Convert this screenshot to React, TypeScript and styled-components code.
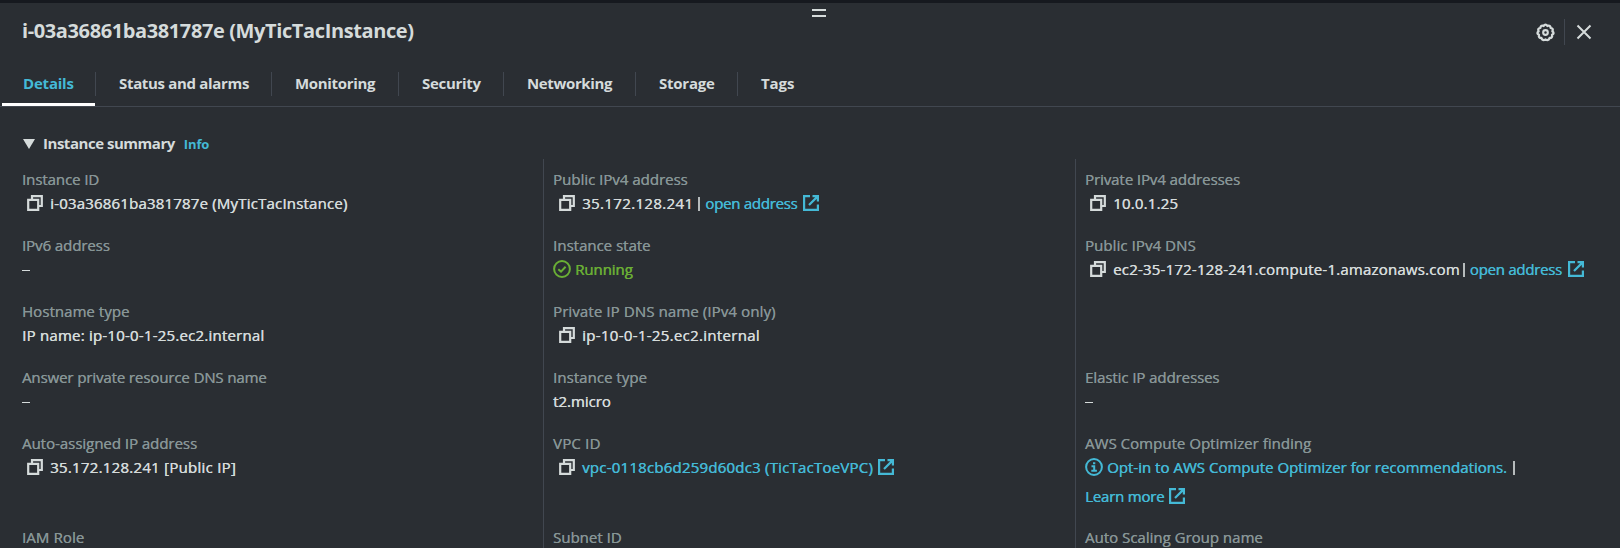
import React from "react";
import styled, { createGlobalStyle } from "styled-components";

const GlobalStyle = createGlobalStyle`
  * { box-sizing: border-box; }
  html, body { margin: 0; background: #2a2e33; overflow: hidden; }
`;

const color = {
  text: "#d5dbdb",
  label: "#879596",
  link: "#44b9d6",
  success: "#6aaf35",
  border: "#414750",
};

const Panel = styled.main`
  display: flex;
  flex-direction: column;
  height: 548px;
  overflow: hidden;
  border-top: 3px solid #16191f;
  background: #2a2e33;
  color: ${color.text};
  font-family: "Open Sans", "Noto Sans", sans-serif;
  font-size: 15px;
  line-height: 24px;
  white-space: nowrap;

  > * { flex-shrink: 0; }
`;

const HandleRow = styled.div`
  display: flex;
  justify-content: center;
  height: 14px;
  padding: 6px 0 0 18px;
`;

const Handle = styled.div`
  width: 14px;
  height: 8px;
  border: solid ${color.text};
  border-width: 2px 0;
`;

const Header = styled.header`
  display: flex;
  justify-content: space-between;
  height: 49px;
  padding: 0 28px 0 22px;
`;

const Title = styled.h1<{ $track: number }>`
  margin: 0;
  font-size: 20px;
  font-weight: 700;
  line-height: 28px;
  letter-spacing: ${(p) => p.$track}px;
`;

const Actions = styled.div`
  display: flex;
  align-items: center;
  height: 26px;
  margin-top: 2px;
`;

const ActionButton = styled.button`
  display: flex;
  padding: 0;
  border: 0;
  background: none;
  color: ${color.text};
`;

const ActionDivider = styled.div`
  width: 1px;
  height: 26px;
  margin: 0 11px 0 9px;
  background: ${color.border};
`;

const TabBar = styled.nav`
  display: flex;
  height: 41px;
  padding-left: 2px;
  border-bottom: 1px solid ${color.border};
`;

const Tab = styled.button<{ $width: number; $track: number; $active?: boolean }>`
  display: flex;
  align-items: flex-start;
  width: ${(p) => p.$width}px;
  height: 40px;
  border: 0;
  border-bottom: 3px solid ${(p) => (p.$active ? "#fff" : "transparent")};
  background: none;
  color: ${(p) => (p.$active ? color.link : color.text)};
  font: 700 15px/24px "Open Sans", "Noto Sans", sans-serif;
  letter-spacing: ${(p) => p.$track}px;
  padding: 5px 0 0 ${(p) => (p.$active ? 21 : 23)}px;
`;

const TabDivider = styled.div`
  width: 1px;
  height: 24px;
  margin-top: 6px;
  background: ${color.border};
`;

const Summary = styled.div`
  display: flex;
  align-items: center;
  height: 24px;
  margin: 24px 0 4px 23px;
`;

const Caret = styled.svg`
  flex: none;
  margin-top: 2px;
`;

const SummaryTitle = styled.h2`
  margin: 0 0 0 8px;
  font-size: 15px;
  font-weight: 700;
  letter-spacing: -0.47px;
`;

const InfoLink = styled.a`
  margin: 1px 0 0 9px;
  color: ${color.link};
  font-size: 13px;
  font-weight: 700;
  letter-spacing: -0.13px;
`;

const Columns = styled.section`
  display: grid;
  grid-template-columns: 543px 532px 1fr;
  height: 400px;
`;

const Column = styled.div<{ $first?: boolean }>`
  display: flex;
  flex-direction: column;
  padding: 8px 0 0 ${(p) => (p.$first ? 22 : 9)}px;
  border-left: ${(p) => (p.$first ? "0" : `1px solid ${color.border}`)};
`;

const Field = styled.div<{ $tall?: boolean }>`
  flex: none;
  height: ${(p) => (p.$tall ? 94 : 66)}px;
`;

const Label = styled.div<{ $track?: number }>`
  height: 24px;
  color: ${color.label};
  letter-spacing: ${(p) => p.$track ?? 0}px;
  text-shadow: 0.25px 0 0 currentColor;
`;

const Value = styled.div`
  display: flex;
  align-items: center;
  height: 24px;
`;

const LearnMoreRow = styled(Value)`
  margin-top: 5px;
`;

const Text = styled.span<{ $track?: number }>`
  letter-spacing: ${(p) => p.$track ?? 0}px;
  text-shadow: 0.4px 0 0 currentColor;
`;

const Link = styled(Text)`
  color: ${color.link};
`;

const Status = styled(Text)`
  margin-left: 4px;
  color: ${color.success};
`;

const Dash = styled.div`
  width: 8px;
  height: 1px;
  margin-top: 3px;
  background: ${color.text};
`;

const Bar = styled.span<{ $left: number; $right?: number }>`
  width: 2px;
  height: 14px;
  margin: 1px ${(p) => p.$right ?? 0}px 0 ${(p) => p.$left}px;
  background: #b6bbbc;
`;

const Icon = styled.svg<{ $left?: number; $right?: number; $tone?: string }>`
  flex: none;
  display: block;
  margin-left: ${(p) => p.$left ?? 0}px;
  margin-right: ${(p) => p.$right ?? 0}px;
  color: ${(p) => p.$tone ?? "inherit"};
  fill: none;
  stroke: currentColor;
  stroke-width: 2;
`;

const CopyIcon = ({ left = 5 }: { left?: number }) => (
  <Icon $left={left} $right={7} width="16" height="16" viewBox="0 0 16 16">
    <path d="M1.2 4.8h10v10h-10z" strokeWidth="2.2" />
    <path d="M5 4.8V1.2h9.8v9.8h-3.6" strokeWidth="2.2" />
  </Icon>
);

const ExternalIcon = ({ left = 5 }: { left?: number }) => (
  <Icon $left={left} $tone={color.link} width="16" height="16" viewBox="0 0 16 16">
    <path d="M7 1.1H1.1v13.8h13.8V9.5" strokeWidth="2.2" />
    <path d="M9.5 1.1h5.4v5.4M14.9 1.1 6 10" strokeWidth="2.2" />
  </Icon>
);

const CheckIcon = () => (
  <Icon $tone={color.success} width="18" height="18" viewBox="0 0 18 18">
    <circle cx="9" cy="9" r="7.9" />
    <path d="M5.3 9.2 8 11.6l4.6-4.8" />
  </Icon>
);

const InfoIcon = () => (
  <Icon $tone={color.link} $right={4} width="18" height="18" viewBox="0 0 18 18">
    <circle cx="9" cy="9" r="7.9" />
    <path d="M6.5 8.3h2.7v4.3M6.3 12.7h5.6M8 5.2h2.3" />
  </Icon>
);

const GearIcon = () => (
  <Icon width="19" height="19" viewBox="0 0 18 18">
    <path
      d="M7.1 2.8Q9 .2 10.9 2.8Q13.8 1.8 13.8 4.6Q16.9 5.2 15.5 7.8Q17.9 9.8 15.2 11.2Q15.8 14.2 12.9 14.2Q11.7 17.3 9 15.5Q6.3 17.3 5.1 14.2Q2.2 14.2 2.8 11.2Q.1 9.8 2.5 7.8Q1.1 5.2 4.2 4.6Q4.2 1.8 7.1 2.8z"
      strokeWidth="2.2"
      strokeLinejoin="round"
    />
    <circle cx="9" cy="9" r="2.2" />
  </Icon>
);

const CloseIcon = () => (
  <Icon width="16" height="16" viewBox="0 0 16 16">
    <path d="M1.5 1.5l13 13M14.5 1.5l-13 13" />
  </Icon>
);

const tabs = [
  { name: "Details", width: 93, track: -0.2 },
  { name: "Status and alarms", width: 175, track: -0.32 },
  { name: "Monitoring", width: 126, track: -0.32 },
  { name: "Security", width: 104, track: -0.3 },
  { name: "Networking", width: 131, track: -0.36 },
  { name: "Storage", width: 101, track: -0.23 },
  { name: "Tags", width: 90, track: -0.07 },
];

export default function App() {
  return (
    <>
      <GlobalStyle />
      <Panel>
        <HandleRow>
          <Handle />
        </HandleRow>
        <Header>
          <Title $track={-0.39}>i-03a36861ba381787e (MyTicTacInstance)</Title>
          <Actions>
            <ActionButton aria-label="Preferences">
              <GearIcon />
            </ActionButton>
            <ActionDivider />
            <ActionButton aria-label="Close">
              <CloseIcon />
            </ActionButton>
          </Actions>
        </Header>
        <TabBar>
          {tabs.map((tab, i) => (
            <React.Fragment key={tab.name}>
              {i > 0 && <TabDivider />}
              <Tab $width={tab.width} $track={tab.track} $active={i === 0}>
                {tab.name}
              </Tab>
            </React.Fragment>
          ))}
        </TabBar>
        <Summary>
          <Caret width="12" height="10" viewBox="0 0 12 10">
            <path d="M0 0h12L6 10z" fill={color.text} />
          </Caret>
          <SummaryTitle>Instance summary</SummaryTitle>
          <InfoLink>Info</InfoLink>
        </Summary>
        <Columns>
          <Column $first>
            <Field>
              <Label $track={-0.08}>Instance ID</Label>
              <Value>
                <CopyIcon />
                <Text $track={0.19}>i-03a36861ba381787e (MyTicTacInstance)</Text>
              </Value>
            </Field>
            <Field>
              <Label $track={-0.08}>IPv6 address</Label>
              <Value>
                <Dash />
              </Value>
            </Field>
            <Field>
              <Label $track={0.05}>Hostname type</Label>
              <Value>
                <Text $track={0.22}>IP name: ip-10-0-1-25.ec2.internal</Text>
              </Value>
            </Field>
            <Field>
              <Label $track={-0.11}>Answer private resource DNS name</Label>
              <Value>
                <Dash />
              </Value>
            </Field>
            <Field $tall>
              <Label $track={-0.03}>Auto-assigned IP address</Label>
              <Value>
                <CopyIcon />
                <Text $track={0.26}>35.172.128.241 [Public IP]</Text>
              </Value>
            </Field>
            <Label $track={0.1}>IAM Role</Label>
          </Column>
          <Column>
            <Field>
              <Label>Public IPv4 address</Label>
              <Value>
                <CopyIcon left={6} />
                <Text $track={0.36}>35.172.128.241</Text>
                <Bar $left={5} $right={5} />
                <Link $track={-0.26}>open address</Link>
                <ExternalIcon left={6} />
              </Value>
            </Field>
            <Field>
              <Label>Instance state</Label>
              <Value>
                <CheckIcon />
                <Status $track={-0.06}>Running</Status>
              </Value>
            </Field>
            <Field>
              <Label $track={0.11}>Private IP DNS name (IPv4 only)</Label>
              <Value>
                <CopyIcon left={6} />
                <Text $track={0.31}>ip-10-0-1-25.ec2.internal</Text>
              </Value>
            </Field>
            <Field>
              <Label $track={0.04}>Instance type</Label>
              <Value>
                <Text $track={-0.03}>t2.micro</Text>
              </Value>
            </Field>
            <Field $tall>
              <Label $track={0.2}>VPC ID</Label>
              <Value>
                <CopyIcon left={6} />
                <Link $track={0.22}>vpc-0118cb6d259d60dc3 (TicTacToeVPC)</Link>
                <ExternalIcon left={5} />
              </Value>
            </Field>
            <Label>Subnet ID</Label>
          </Column>
          <Column>
            <Field>
              <Label $track={-0.08}>Private IPv4 addresses</Label>
              <Value>
                <CopyIcon />
                <Text $track={0.2}>10.0.1.25</Text>
              </Value>
            </Field>
            <Field>
              <Label $track={0.07}>Public IPv4 DNS</Label>
              <Value>
                <CopyIcon />
                <Text $track={0.2}>ec2-35-172-128-241.compute-1.amazonaws.com</Text>
                <Bar $left={3} $right={5} />
                <Link $track={-0.26}>open address</Link>
                <ExternalIcon left={6} />
              </Value>
            </Field>
            <Field />
            <Field>
              <Label $track={-0.08}>Elastic IP addresses</Label>
              <Value>
                <Dash />
              </Value>
            </Field>
            <Field $tall>
              <Label $track={0.03}>AWS Compute Optimizer finding</Label>
              <Value>
                <InfoIcon />
                <Link $track={0.01}>Opt-in to AWS Compute Optimizer for recommendations.</Link>
                <Bar $left={6} />
              </Value>
              <LearnMoreRow>
                <Link $track={-0.2}>Learn more</Link>
                <ExternalIcon left={5} />
              </LearnMoreRow>
            </Field>
            <Label>Auto Scaling Group name</Label>
          </Column>
        </Columns>
      </Panel>
    </>
  );
}
